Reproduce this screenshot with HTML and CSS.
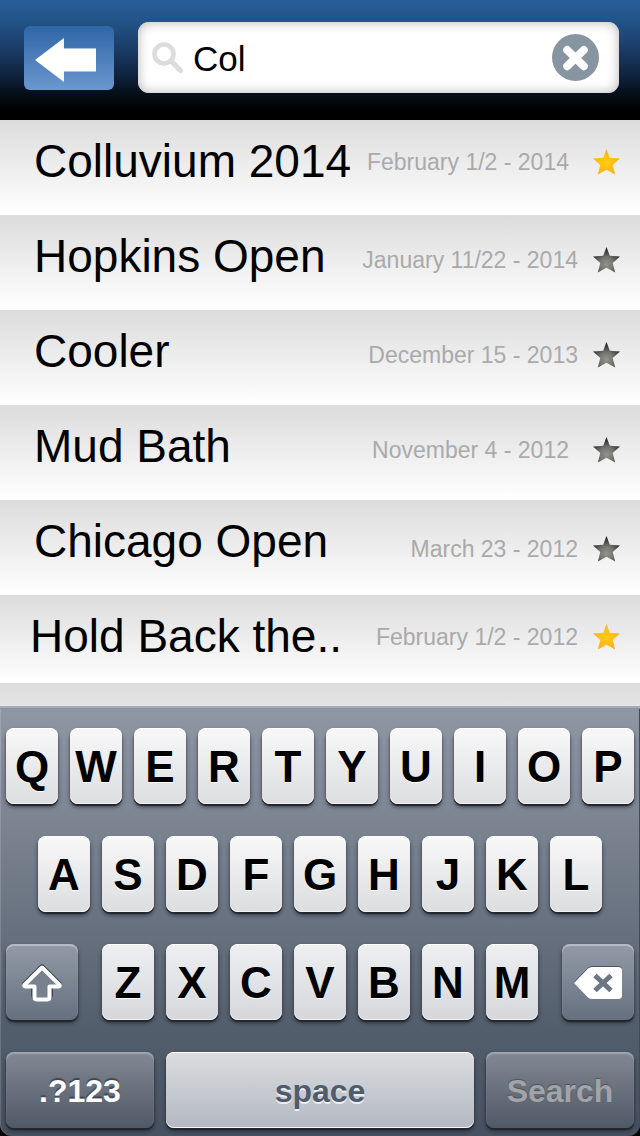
FILE: index.html
```html
<!DOCTYPE html>
<html lang="en">
<head>
<meta charset="utf-8">
<meta name="viewport" content="width=device-width, initial-scale=1">
<title>Tournament search</title>
<link rel="stylesheet" href="styles.css">
</head>
<body>
<svg class="defs" width="0" height="0" aria-hidden="true">
  <defs>
    <radialGradient id="gold" cx="50%" cy="50%" r="55%">
      <stop offset="0" stop-color="#ffce10"/>
      <stop offset="1" stop-color="#fcae22"/>
    </radialGradient>
    <radialGradient id="gray" cx="50%" cy="68%" r="62%">
      <stop offset="0" stop-color="#92928f"/>
      <stop offset="0.45" stop-color="#73736f"/>
      <stop offset="1" stop-color="#20201e"/>
    </radialGradient>
    <symbol id="star" viewBox="0 0 27 26">
      <path d="M13.5 0 L16.800 8.800 L27 9.600 L19.700 16 L22.200 25.500 L13.500 20.800 L4.800 25.500 L7.300 16 L0 9.600 L10.200 8.800 Z"/>
    </symbol>
  </defs>
</svg>
<div class="app">
  <header class="topbar">
    <button class="back" type="button" aria-label="Back">
      <svg viewBox="0 0 90 64" aria-hidden="true">
        <path fill="#a9c3e3" d="M40 22h32v24H40z"/>
        <path fill="#fff" d="M11 34 40 12v11h32v22H40v11z"/>
      </svg>
    </button>
    <form class="search" role="search">
      <svg class="search-icon" viewBox="0 0 32 32" aria-hidden="true">
        <circle cx="12" cy="12" r="9.5" fill="none" stroke="#dcdcdc" stroke-width="4.6"/>
        <path d="M19 19 28.500 28.500" stroke="#dcdcdc" stroke-width="5.2" stroke-linecap="round"/>
      </svg>
      <input class="search-input" type="text" value="Col" aria-label="Search tournaments">
      <button class="clear" type="button" aria-label="Clear search">
        <svg viewBox="0 0 47 47" aria-hidden="true">
          <circle cx="23.500" cy="23.500" r="23.500" fill="#8795a3"/>
          <path d="M15.200 16 31.800 32.200M31.800 16 15.200 32.200" stroke="#fff" stroke-width="8" stroke-linecap="round"/>
        </svg>
      </button>
    </form>
  </header>

  <main>
    <ul class="results">
      <li class="row row-favorite row-spaced">
        <span class="title">Colluvium 2014</span>
        <span class="date">February 1/2 - 2014</span>
        <button class="star star-on" type="button" aria-label="Remove favorite"><svg><use href="#star"/></svg></button>
      </li>
      <li class="row">
        <span class="title">Hopkins Open</span>
        <span class="date">January 11/22 - 2014</span>
        <button class="star" type="button" aria-label="Add favorite"><svg><use href="#star"/></svg></button>
      </li>
      <li class="row">
        <span class="title">Cooler</span>
        <span class="date">December 15 - 2013</span>
        <button class="star" type="button" aria-label="Add favorite"><svg><use href="#star"/></svg></button>
      </li>
      <li class="row row-spaced">
        <span class="title">Mud Bath</span>
        <span class="date">November 4 - 2012</span>
        <button class="star" type="button" aria-label="Add favorite"><svg><use href="#star"/></svg></button>
      </li>
      <li class="row row-low">
        <span class="title">Chicago Open</span>
        <span class="date">March 23 - 2012</span>
        <button class="star" type="button" aria-label="Add favorite"><svg><use href="#star"/></svg></button>
      </li>
      <li class="row row-favorite row-last">
        <span class="title">Hold Back the..</span>
        <span class="date">February 1/2 - 2012</span>
        <button class="star star-on" type="button" aria-label="Remove favorite"><svg><use href="#star"/></svg></button>
      </li>
    </ul>
    <div class="row-peek"></div>
  </main>

  <div class="keyboard-frame">
    <div class="keyboard">
      <div class="keys">
        <button class="key" type="button">Q</button>
        <button class="key" type="button">W</button>
        <button class="key" type="button">E</button>
        <button class="key" type="button">R</button>
        <button class="key" type="button">T</button>
        <button class="key" type="button">Y</button>
        <button class="key" type="button">U</button>
        <button class="key" type="button">I</button>
        <button class="key" type="button">O</button>
        <button class="key" type="button">P</button>
      </div>
      <div class="keys">
        <button class="key" type="button">A</button>
        <button class="key" type="button">S</button>
        <button class="key" type="button">D</button>
        <button class="key" type="button">F</button>
        <button class="key" type="button">G</button>
        <button class="key" type="button">H</button>
        <button class="key" type="button">J</button>
        <button class="key" type="button">K</button>
        <button class="key" type="button">L</button>
      </div>
      <div class="keys keys-lower">
        <button class="key key-icon" type="button" aria-label="Shift">
          <svg width="44" height="40" viewBox="0 0 44 40" aria-hidden="true">
            <path d="M22 3 4.500 20.300Q3.500 22 5.500 22H13V31.500Q13 34.500 16 34.500H28Q31 34.500 31 31.500V22H38.500Q40.500 22 39.500 20.300Z" fill="none" stroke="#414a57" stroke-width="4" stroke-linejoin="round"/>
            <path d="M22 4.500 4.500 21.800Q3.500 23.500 5.500 23.500H14.500V34Q14.500 36.500 17 36.500H27Q29.500 36.500 29.500 34V23.500H38.500Q40.500 23.500 39.500 21.800Z" fill="#78818e" stroke="#fff" stroke-width="4" stroke-linejoin="round"/>
          </svg>
        </button>
        <div class="keys">
          <button class="key" type="button">Z</button>
          <button class="key" type="button">X</button>
          <button class="key" type="button">C</button>
          <button class="key" type="button">V</button>
          <button class="key" type="button">B</button>
          <button class="key" type="button">N</button>
          <button class="key" type="button">M</button>
        </div>
        <button class="key key-icon" type="button" aria-label="Delete">
          <svg width="50" height="36" viewBox="0 0 50 36" aria-hidden="true">
            <path d="M1 17 15 2.500Q17 1 19 1H45Q49 1 49 4V30Q49 33 45 33H19Q17 33 15 31.500Z" fill="#4b5462"/>
            <path d="M1 18 15 3.500Q17 2 19 2H45Q49 2 49 5V31Q49 34 45 34H19Q17 34 15 32.500Z" fill="#fff"/>
            <path d="M22 10.500 38 25.500M38 10.500 22 25.500" stroke="#6c7684" stroke-width="5"/>
          </svg>
        </button>
      </div>
      <div class="keys-bottom">
        <button class="key key-dark" type="button">.?123</button>
        <button class="key key-space" type="button">space</button>
        <button class="key key-dark key-search" type="button">Search</button>
      </div>
    </div>
  </div>
</div>
</body>
</html>
```

FILE: styles.css
```css
* {
  box-sizing: border-box;
}

body {
  margin: 0;
  background: #000;
  font-family: "Liberation Sans", Arial, sans-serif;
}

button {
  margin: 0;
  padding: 0;
  border: 0;
  background: none;
  font-family: inherit;
  cursor: pointer;
}

svg {
  display: block;
}

.defs {
  position: absolute;
}

.app {
  display: flex;
  flex-direction: column;
  min-height: 100vh;
}

/* Top bar */

.topbar {
  display: flex;
  align-items: center;
  gap: 24px;
  padding: 22px 21px 27px 24px;
  background: linear-gradient(#285d98 0%, #23568c 14%, #1d4370 35%, #0f2440 62%, #050c14 80%, #000 92%);
}

.back {
  flex: none;
  width: 90px;
  height: 64px;
  border-radius: 6px;
  background: linear-gradient(#2f66a6, #6a97ce);
}

.search {
  display: flex;
  flex: 1;
  align-items: center;
  min-width: 0;
  height: 71px;
  padding: 0 20px 0 14px;
  border-radius: 11px;
  background: #fff;
  box-shadow: inset 0 0 12px #b4b4b4;
}

.search-icon {
  flex: none;
  width: 32px;
  height: 32px;
}

.search-input {
  flex: 1;
  min-width: 0;
  height: 44px;
  margin: 0;
  padding: 2px 9px 0;
  border: 0;
  outline: 0;
  background: transparent;
  color: #000;
  font-family: inherit;
  font-size: 35px;
}

.clear {
  flex: none;
  width: 47px;
  height: 47px;
}

/* Results */

.results {
  margin: 0;
  padding: 0;
  list-style: none;
}

.row {
  --meta-top: 32px;
  --star-gap: 15px;
  display: flex;
  align-items: flex-start;
  height: 95px;
  padding: 0 20px 0 34px;
  background: linear-gradient(#dcdcdc, #fff);
  white-space: nowrap;
}

.row-favorite {
  --meta-top: 29px;
}

.row-low {
  --meta-top: 36px;
}

.row-spaced {
  --star-gap: 24px;
}

.row-last {
  height: 88px;
  padding-left: 30px;
}

.title {
  flex: 1;
  min-width: 0;
  padding-top: 14px;
  color: #000;
  font-size: 46px;
  line-height: 54px;
}

.date {
  padding: var(--meta-top) var(--star-gap) 0 0;
  color: #aaa;
  font-size: 23px;
  line-height: 26px;
}

.star {
  flex: none;
  padding-top: var(--meta-top);
  fill: url(#gray);
}

.star svg {
  width: 27px;
  height: 26px;
}

.star-on {
  fill: url(#gold);
}

.row-peek {
  height: 23px;
  background: linear-gradient(#dcdcdc, #e4e4e4);
}

/* Keyboard */

.keyboard-frame {
  flex: 1;
  background: #000;
}

.keyboard {
  display: grid;
  gap: 32px;
  padding: 20px 6px 8px;
  border-top: 2px solid #a6adb8;
  border-radius: 0 0 12px 12px;
  background: linear-gradient(#9097a4 0%, #7c8491 27%, #697280 50%, #535e6d 75%, #475161 100%);
  box-shadow: inset 0 1px #8b92a0, inset 1px 0 rgba(255, 255, 255, 0.15), inset -1px 0 #424a57;
  container-type: inline-size;
}

.keys {
  display: flex;
  justify-content: center;
  gap: 12px;
}

.keys-lower {
  justify-content: space-between;
}

.keys-bottom {
  display: grid;
  grid-template-columns: 37fr 77fr 37fr;
  gap: 12px;
}

.key {
  display: flex;
  align-items: center;
  justify-content: center;
  width: calc((100cqw - 108px) / 10);
  height: 76px;
  padding-top: 2px;
  border-radius: 8px;
  background: linear-gradient(#f8f8f9, #dcdddf);
  box-shadow: inset 0 1px #fff, inset 0 -1px #f4f4f5, 0 2px 1px #22262d, 0 3px 4px rgba(20, 24, 32, 0.6);
  color: #000;
  font-size: 44px;
  font-weight: 700;
  line-height: 50px;
  text-shadow: 0 1px #fff;
}

.keys-lower .key {
  background: linear-gradient(#eeeff1, #d6d7db);
}

.keys-lower .key-icon {
  flex: none;
  width: 72px;
  background: linear-gradient(#929aa6, #66707f);
  box-shadow: inset 0 2px 1px #b5bcc6, 0 2px 1px #22262d, 0 3px 4px rgba(20, 24, 32, 0.6);
}

.keys-bottom .key {
  width: auto;
  font-size: 32px;
}

.keys-bottom .key-dark {
  background: linear-gradient(#828893, #505967);
  box-shadow: inset 0 2px 1px #a0a6af, 0 2px 1px #22262d, 0 3px 4px rgba(20, 24, 32, 0.6);
  color: #fff;
  text-shadow: 0 -2px 1px #3f4651;
}

.keys-bottom .key-space {
  background: linear-gradient(#dcdde0, #b3b8c2);
  color: #505b6b;
  text-shadow: 0 2px #eceef1;
}

.keys-bottom .key-search {
  color: #a2a4a7;
  text-shadow: 0 -1px 1px #4a515c;
}
```
